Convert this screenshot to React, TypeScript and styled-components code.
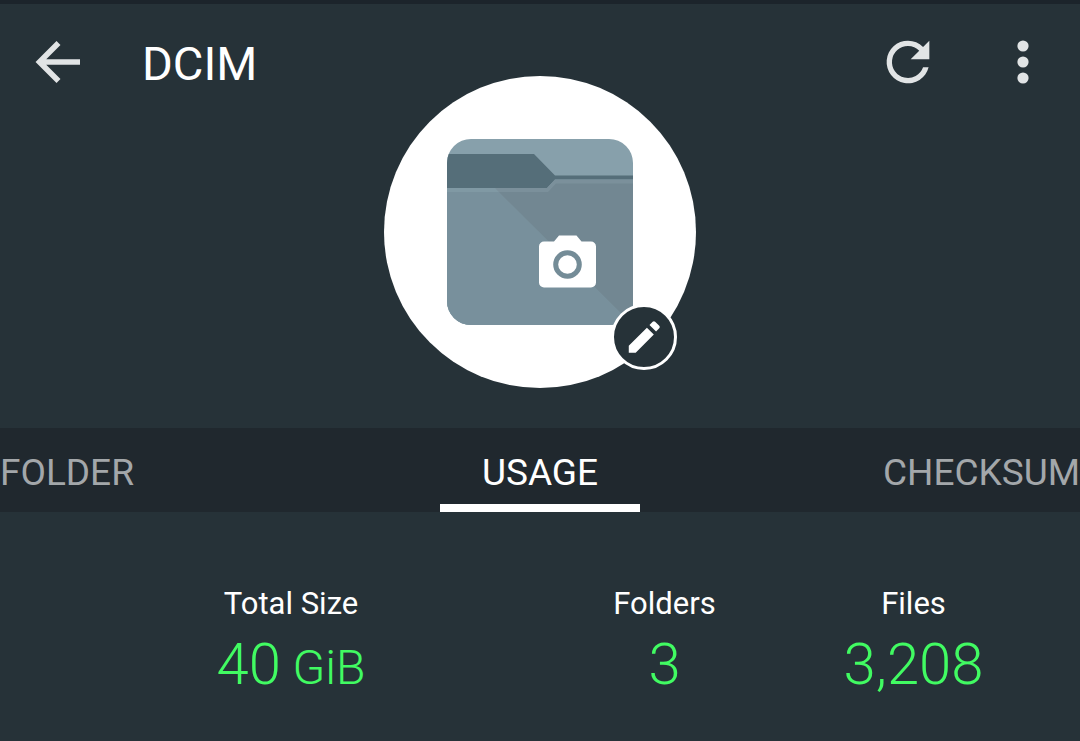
import React from "react";
import styled, { createGlobalStyle } from "styled-components";

const colors = {
  background: "#263238",
  statusBar: "#1c242b",
  tabBar: "#20282e",
  icon: "#e1e4e5",
  muted: "#a3a7aa",
  accent: "#41fb62",
};

const GlobalStyle = createGlobalStyle`
  * {
    box-sizing: border-box;
  }

  body {
    margin: 0;
    background: ${colors.background};
    color: #fff;
    font-family: Roboto, "Liberation Sans", sans-serif;
  }
`;

const Page = styled.main`
  min-height: 100vh;
  overflow-x: hidden;
  background: ${colors.background};
`;

const StatusStrip = styled.div`
  height: 4px;
  background: ${colors.statusBar};
`;

const Toolbar = styled.header`
  display: flex;
  align-items: center;
  height: 116px;
  padding: 0 25px 0 26px;
`;

const Title = styled.h1`
  flex: 1;
  margin: 0;
  padding: 4px 0 0 52px;
  font-size: 47px;
  line-height: 56px;
  font-weight: 400;
`;

const Actions = styled.div`
  display: flex;
  gap: 51px;
`;

const IconButton = styled.button`
  display: flex;
  width: 64px;
  height: 64px;
  padding: 0;
  border: 0;
  background: none;
  color: ${colors.icon};
  cursor: pointer;
`;

const Hero = styled.section`
  display: flex;
  justify-content: center;
  margin-top: -44px;
  padding-bottom: 40px;
`;

const Avatar = styled.div`
  position: relative;
  display: flex;
  align-items: center;
  justify-content: center;
  width: 312px;
  height: 312px;
  border-radius: 50%;
  background: #fff;
`;

const EditBadge = styled.button`
  position: absolute;
  right: 19px;
  bottom: 18px;
  display: flex;
  align-items: center;
  justify-content: center;
  width: 66px;
  height: 66px;
  padding: 0;
  border: 3px solid #fff;
  border-radius: 50%;
  background: ${colors.background};
  color: #fff;
  cursor: pointer;
`;

const Tabs = styled.nav`
  display: grid;
  grid-template-columns: 1fr 200px 1fr;
  height: 84px;
  background: ${colors.tabBar};
`;

const Tab = styled.button<{ $active?: boolean; $align?: string }>`
  padding: 14px 0 0;
  border: 0;
  border-bottom: 8px solid ${(p) => (p.$active ? "#fff" : "transparent")};
  background: none;
  color: ${(p) => (p.$active ? "#fff" : colors.muted)};
  font-family: inherit;
  font-size: 37px;
  line-height: 44px;
  text-align: ${(p) => p.$align ?? "center"};
  cursor: pointer;
`;

const Stats = styled.dl`
  display: grid;
  grid-template-columns: 2fr 1fr 1fr;
  margin: 0;
  padding: 72px 42px 36px;
`;

const Stat = styled.div`
  text-align: center;
`;

const StatLabel = styled.dt`
  font-size: 31px;
  line-height: 40px;
`;

const StatValue = styled.dd`
  margin: 0;
  color: ${colors.accent};
  font-size: 58px;
  line-height: 80px;
  font-weight: 300;
`;

const Unit = styled.span`
  font-size: 48px;
`;

const BackIcon = () => (
  <svg width="64" height="64" viewBox="0 0 64 64" fill="none" stroke="currentColor" strokeWidth="5.6" aria-hidden="true">
    <path d="M32.5 13 13.5 32l19 19M13.5 32H54" />
  </svg>
);

const RefreshIcon = () => (
  <svg width="64" height="64" viewBox="0 0 24 24" fill="currentColor" aria-hidden="true">
    <path d="M17.65 6.35A7.96 7.96 0 0 0 12 4a8 8 0 1 0 7.73 10h-2.08A6 6 0 1 1 12 6c1.66 0 3.14.69 4.22 1.78L13 11h7V4z" />
  </svg>
);

const MoreIcon = () => (
  <svg width="64" height="64" viewBox="0 0 24 24" fill="currentColor" aria-hidden="true">
    <circle cx="12" cy="6" r="2.1" />
    <circle cx="12" cy="12" r="2.1" />
    <circle cx="12" cy="18" r="2.1" />
  </svg>
);

const PencilIcon = () => (
  <svg width="42" height="42" viewBox="0 0 24 24" fill="currentColor" aria-hidden="true">
    <path d="M3.300 17.050V21h3.950L17.610 10.640l-3.950-3.950zM20.710 7.040a1 1 0 0 0 0-1.410l-2.340-2.340a1 1 0 0 0-1.410 0l-1.830 1.830 3.750 3.750z" />
  </svg>
);

const FolderIcon = () => (
  <svg width="186" height="186" viewBox="0 0 186 186" role="img" aria-label="Camera folder">
    <defs>
      <clipPath id="folder-shape">
        <rect width="186" height="186" rx="24" />
      </clipPath>
    </defs>
    <g clipPath="url(#folder-shape)">
      <rect width="186" height="186" fill="#87a0ab" />
      <path d="M0 15h87l21 21.500h78V60H0z" fill="#556e79" />
      <path d="M0 49h100l8-8.500h78V186H0z" fill="#8099a4" />
      <path d="M0 53h101l8-8.500h77V186H0z" fill="#78909c" />
      <path d="M48 49h52l8-8.500h78V186z" fill="#7b909b" />
      <path d="M52 53h49l8-8.500h77V186z" fill="#728792" />
      <path
        d="M97 102.500h10l5-6h17.500l5 6H144a5 5 0 0 1 5 5v36a5 5 0 0 1-5 5H97a5 5 0 0 1-5-5v-36a5 5 0 0 1 5-5z"
        fill="#fff"
      />
      <circle cx="120.500" cy="125.500" r="11.800" fill="none" stroke="#748c97" strokeWidth="5" />
    </g>
  </svg>
);

export default function App() {
  return (
    <Page>
      <GlobalStyle />
      <StatusStrip />
      <Toolbar>
        <IconButton aria-label="Back">
          <BackIcon />
        </IconButton>
        <Title>DCIM</Title>
        <Actions>
          <IconButton aria-label="Refresh">
            <RefreshIcon />
          </IconButton>
          <IconButton aria-label="More options">
            <MoreIcon />
          </IconButton>
        </Actions>
      </Toolbar>
      <Hero>
        <Avatar>
          <FolderIcon />
          <EditBadge aria-label="Edit icon">
            <PencilIcon />
          </EditBadge>
        </Avatar>
      </Hero>
      <Tabs>
        <Tab $align="left">FOLDER</Tab>
        <Tab $active aria-current="page">
          USAGE
        </Tab>
        <Tab $align="right">CHECKSUM</Tab>
      </Tabs>
      <Stats>
        <Stat>
          <StatLabel>Total Size</StatLabel>
          <StatValue>
            40<Unit> GiB</Unit>
          </StatValue>
        </Stat>
        <Stat>
          <StatLabel>Folders</StatLabel>
          <StatValue>3</StatValue>
        </Stat>
        <Stat>
          <StatLabel>Files</StatLabel>
          <StatValue>3,208</StatValue>
        </Stat>
      </Stats>
    </Page>
  );
}
